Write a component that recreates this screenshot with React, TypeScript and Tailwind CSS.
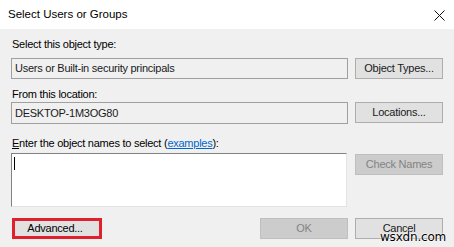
import React from "react";

const body = { fontFamily: '"Liberation Sans", Arial, sans-serif' };

function Btn({ children, disabled, className = "" }: { children: React.ReactNode; disabled?: boolean; className?: string }) {
  return (
    <div
      className={
        "flex items-center justify-center h-[21px] w-[88px] text-[11px] tracking-[-0.25px] border " +
        (disabled ? "bg-[#cccccc] border-[#bfbfbf] text-[#838383]" : "bg-[#e1e1e1] border-[#adadad] text-[#1a1a1a]") +
        " " +
        className
      }
    >
      {children}
    </div>
  );
}

export default function App() {
  return (
    <div className="relative w-[454px] h-[247px] bg-[#f0f0f0] overflow-hidden" style={body}>
      <div className="h-[29px] bg-white flex items-center justify-between pl-[8px] pr-[8px]">
        <span className="text-[11.5px] text-black" style={{ fontFamily: '"Liberation Sans", Arial, sans-serif' }}>
          Select Users or Groups
        </span>
        <svg width="11" height="11" viewBox="0 0 11 11" className="mr-[1px] mt-[1px]">
          <path d="M0.5 0.5 L10.5 10.5 M10.5 0.5 L0.5 10.5" stroke="#111" strokeWidth="1" />
        </svg>
      </div>
      <div className="pl-[11px] pr-[11px] text-[11px] tracking-[-0.25px] text-black">
        <div className="h-[13px] leading-[13px] mt-[9px] pl-[1px]">Select this object type:</div>
        <div className="flex items-start gap-[7px] mt-[7px]">
          <div className="w-[337px] h-[21px] border border-[#a0a0a0] bg-[#f0f0f0] flex items-center pl-[3px] text-[#1a1a1a]">
            Users or Built-in security principals
          </div>
          <Btn>Object Types...</Btn>
        </div>
        <div className="h-[13px] leading-[13px] mt-[9px] pl-[1px]">From this location:</div>
        <div className="flex items-start gap-[7px] mt-[1px]">
          <div className="w-[337px] h-[22px] border border-[#a0a0a0] bg-[#f0f0f0] flex items-center pl-[3px] text-[#1a1a1a]">
            DESKTOP-1M3OG80
          </div>
          <Btn>Locations...</Btn>
        </div>
        <div className="h-[13px] leading-[13px] mt-[13px] pl-[1px]">
          <span className="underline">E</span>nter the object names to select (
          <span className="text-[#0066cc] underline">examples</span>):
        </div>
        <div className="flex items-start gap-[8px] mt-[3px]">
          <div className="w-[336px] h-[54px] border border-[#828282] border-r-[#e3e3e3] border-b-[#e3e3e3] bg-white pl-[2px] pt-[3px]">
            <div className="w-[1px] h-[13px] bg-black" />
          </div>
          <Btn disabled className="mt-[1px]">Check Names</Btn>
        </div>
        <div className="flex items-center mt-[11px]">
          <div className="border-[3px] border-[#e0202c] ml-[1px]">
            <div className="w-[84px] h-[15px] bg-[#e1e1e1] flex items-center justify-center pr-[4px]">Advanced...</div>
          </div>
          <div className="flex-1" />
          <Btn disabled className="w-[74px]">OK</Btn>
          <Btn className="w-[74px] ml-[7px] border-[#7a7a7a]">Cancel</Btn>
        </div>
      </div>
      <div
        className="absolute left-[380px] top-[230px] text-[12px] text-black leading-[14px] tracking-[-0.2px]"
        style={{ fontFamily: '"DejaVu Sans", sans-serif', textShadow: "0 0 2px #fff, 0 0 2px #fff, 0 0 1px #fff" }}
      >
        wsxdn.com
      </div>
    </div>
  );
}
